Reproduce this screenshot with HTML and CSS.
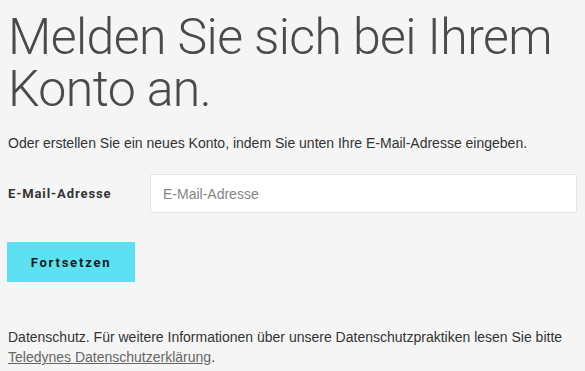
FILE: index.html
```html
<!DOCTYPE html>
<html lang="de">
<head>
    <meta charset="UTF-8">
    <meta name="viewport" content="width=device-width, initial-scale=1.0">
    <title>Anmelden</title>
    <link rel="stylesheet" href="styles.css">
</head>
<body>
    <main class="login">
        <h1 class="login-title">Melden Sie sich bei Ihrem Konto an.</h1>
        <p class="login-intro">Oder erstellen Sie ein neues Konto, indem Sie unten Ihre E-Mail-Adresse eingeben.</p>

        <form class="login-form">
            <div class="field">
                <label class="field-label" for="email">E-Mail-Adresse</label>
                <input class="field-input" id="email" type="email" placeholder="E-Mail-Adresse">
            </div>
            <button class="btn-primary" type="button">Fortsetzen</button>
        </form>

        <p class="privacy">Datenschutz. Für weitere Informationen über unsere Datenschutzpraktiken lesen Sie bitte <a href="#">Teledynes Datenschutzerklärung</a>.</p>
    </main>
</body>
</html>
```

FILE: styles.css
```css
* {
    margin: 0;
    padding: 0;
    box-sizing: border-box;
}

body {
    background-color: #f5f5f5;
    color: #333333;
    font-family: 'Liberation Sans', Arial, sans-serif;
    font-size: 14px;
}

.login {
    padding: 11px 8px 0 8px;
}

.login-title {
    font-family: 'Roboto', sans-serif;
    font-weight: 300;
    font-size: 50px;
    line-height: 52px;
    letter-spacing: -0.6px;
    color: #4a4a4a;
    max-width: 570px;
    margin-bottom: 18px;
}

.login-intro {
    line-height: 20px;
    margin-bottom: 21px;
}

.field {
    display: flex;
    align-items: center;
    margin-bottom: 29px;
}

.field-label {
    width: 142px;
    font-family: 'Roboto', sans-serif;
    font-weight: 700;
    font-size: 13px;
    letter-spacing: 0.9px;
    color: #333333;
}

.field-input {
    flex: 1;
    height: 39px;
    padding: 0 12px;
    background-color: #ffffff;
    border: 1px solid #e6e6e6;
    border-radius: 2px;
    font-family: 'Liberation Sans', Arial, sans-serif;
    font-size: 14px;
    color: #333333;
}

.field-input::placeholder {
    color: #858585;
}

.btn-primary {
    display: block;
    width: 128px;
    height: 40px;
    margin-left: -1px;
    background-color: #5ce1f2;
    border: none;
    font-family: 'Roboto', sans-serif;
    font-weight: 700;
    font-size: 13px;
    letter-spacing: 1.8px;
    color: #1a1a1a;
}

.privacy {
    margin-top: 45px;
    line-height: 20px;
}

.privacy a {
    color: #666666;
}
```
